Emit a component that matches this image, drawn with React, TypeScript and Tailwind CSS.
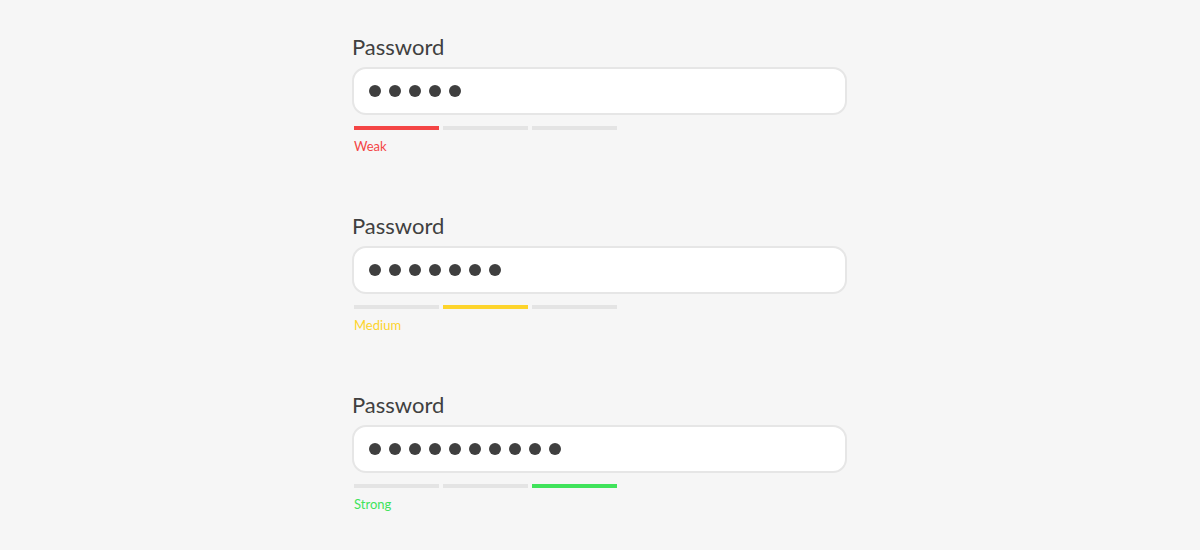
const STRENGTHS = [
  { count: 5, label: 'Weak', active: 0, color: 'bg-[#f44545]', text: 'text-[#f44545]' },
  { count: 7, label: 'Medium', active: 1, color: 'bg-[#fdd42b]', text: 'text-[#fdd42b]' },
  { count: 10, label: 'Strong', active: 2, color: 'bg-[#40e35b]', text: 'text-[#40e35b]' },
];

function PasswordField({ count, label, active, color, text }: (typeof STRENGTHS)[number]) {
  return (
    <div className="flex flex-col">
      <label className="text-[22px] leading-[28px] text-[#404040]">Password</label>
      {/* Input */}
      <div className="mt-[6px] h-[48px] w-[495px] rounded-[14px] border-2 border-[#e6e6e6] bg-white flex items-center gap-[8px] pl-[15px]">
        {Array.from({ length: count }).map((_, i) => (
          <span key={i} className="block w-[12px] h-[12px] rounded-full bg-[#3f3f3f]" />
        ))}
      </div>
      {/* Strength bars */}
      <div className="mt-[11px] ml-[2px] flex gap-[4px]">
        {[0, 1, 2].map((i) => (
          <span key={i} className={`block h-[4px] w-[85px] ${i === active ? color : 'bg-[#e4e4e4]'}`} />
        ))}
      </div>
      <span className={`mt-[8px] ml-[2px] text-[13px] leading-[16px] ${text}`}>{label}</span>
    </div>
  );
}

export default function App() {
  return (
    <div className="w-[1200px] h-[550px] bg-[#f6f6f6] font-['Lato',sans-serif] flex flex-col pl-[352px] pt-[33px] gap-[58px]">
      {STRENGTHS.map((s) => (
        <PasswordField key={s.label} {...s} />
      ))}
    </div>
  );
}
